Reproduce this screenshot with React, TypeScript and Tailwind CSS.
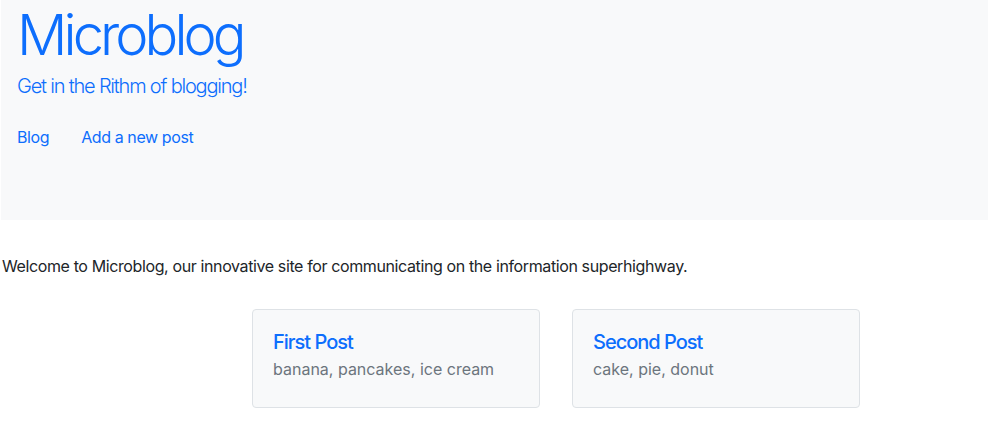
export default function App() {
  const posts = [
    { title: "First Post", desc: "banana, pancakes, ice cream" },
    { title: "Second Post", desc: "cake, pie, donut" },
  ];

  return (
    <div className="min-h-screen bg-white text-[#212529] font-['Inter','Liberation_Sans',sans-serif]">
      {/* Header */}
      <div className="ml-px h-[220px] bg-[#f8f9fa]">
        <h1 className="px-4 pt-0.5 text-[56px] leading-[67px] font-light tracking-[-0.07em] text-[#0d6efd]">
          Microblog
        </h1>
        <p className="mt-0.5 px-4 text-[20px] leading-[30px] font-light tracking-[-0.06em] text-[#0d6efd]">
          Get in the Rithm of blogging!
        </p>
        <nav className="mt-4 flex text-[16px] leading-6 tracking-[-0.025em] text-[#0d6efd]">
          <a href="#" className="px-4 py-2">Blog</a>
          <a href="#" className="px-4 py-2">Add a new post</a>
        </nav>
      </div>

      <p className="mt-[34px] px-0.5 text-[16px] leading-6 tracking-[-0.024em]">
        Welcome to Microblog, our innovative site for communicating on the information superhighway.
      </p>

      <div className="mt-[31px] ml-[252px] flex gap-8">
        {posts.map((p) => (
          <div
            key={p.title}
            className="w-[288px] h-[99px] rounded border border-[#dee2e6] bg-[#f8f9fa] px-5 pt-5"
          >
            <div className="text-[20px] leading-6 font-medium tracking-[-0.05em] text-[#0d6efd]">
              {p.title}
            </div>
            <div className="mt-[3px] text-[16px] leading-6 text-[#6c757d]">{p.desc}</div>
          </div>
        ))}
      </div>
    </div>
  );
}
